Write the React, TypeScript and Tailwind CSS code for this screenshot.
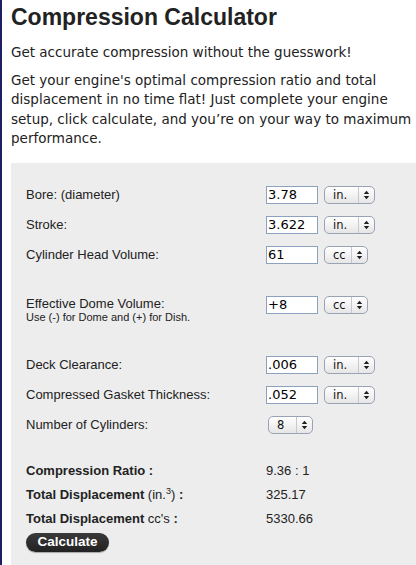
import React from "react";

const SANS = "font-['Liberation_Sans',Arial,sans-serif]";
const LUC = "font-['DejaVu_Sans',sans-serif]";

function Arrows() {
  return (
    <svg width="7" height="10" viewBox="0 0 7 10">
      <polygon points="0.8,4 3.5,0.8 6.2,4" fill="#1f1f1f" />
      <polygon points="0.8,6 3.5,9.2 6.2,6" fill="#1f1f1f" />
    </svg>
  );
}

function Sel({ label, className }: { label: string; className: string }) {
  return (
    <div
      className={`flex h-[18px] items-stretch rounded-[5px] border border-[#9aa3b4] bg-gradient-to-b from-white to-[#e6e6e6] ${className}`}
    >
      <span className={`flex-1 pl-[8px] text-[11.5px] leading-[16px] text-[#111] ${LUC}`}>{label}</span>
      <span className="flex w-[16px] items-center justify-center border-l border-[#c4c8d0]">
        <Arrows />
      </span>
    </div>
  );
}

function Field({ value }: { value: string }) {
  return (
    <input
      readOnly
      defaultValue={value}
      className={`h-[18px] w-[52px] border border-[#8ea2bf] bg-white px-[1px] text-[13px] leading-[16px] text-black outline-none ${LUC}`}
    />
  );
}

function Row({ label, value, unit, selW }: { label: string; value: string; unit: string; selW: string }) {
  return (
    <div className="flex h-[30px] items-center">
      <div className="w-[240px] text-[13px] text-[#222]">{label}</div>
      <Field value={value} />
      <Sel label={unit} className={`ml-[6px] ${selW}`} />
    </div>
  );
}

export default function App() {
  return (
    <div className={`min-h-screen w-[416px] overflow-hidden border-l-2 border-[#1d1f62] bg-white pl-[9px] ${SANS}`}>
      <h1 className="mt-[4px] text-[23px] font-bold leading-[26px] text-[#222]">Compression Calculator</h1>
      <p className={`mt-[13px] text-[13.5px] leading-[19.5px] text-[#222] ${LUC}`}>
        Get accurate compression without the guesswork!
      </p>
      <p className={`mt-[8px] whitespace-nowrap text-[13.5px] leading-[19.5px] text-[#222] ${LUC}`}>
        Get your engine's optimal compression ratio and total
        <br />
        displacement in no time flat! Just complete your engine
        <br />
        setup, click calculate, and you’re on your way to maximum
        <br />
        performance.
      </p>

      <div className="mt-[14px] min-h-[420px] bg-[#ededed] pl-[15px] pt-[17px] text-[#222]">
        <Row label="Bore: (diameter)" value="3.78" unit="in." selW="w-[51px]" />
        <Row label="Stroke:" value="3.622" unit="in." selW="w-[51px]" />
        <Row label="Cylinder Head Volume:" value="61" unit="cc" selW="w-[44px]" />

        <div className="mt-[26px] flex items-start">
          <div className="w-[240px]">
            <div className="text-[13px] leading-[15px]">Effective Dome Volume:</div>
            <div className="text-[11px] leading-[12px]">Use (-) for Dome and (+) for Dish.</div>
          </div>
          <Field value="+8" />
          <Sel label="cc" className="ml-[6px] w-[44px]" />
        </div>

        <div className="mt-[27px]">
          <Row label="Deck Clearance:" value=".006" unit="in." selW="w-[51px]" />
          <Row label="Compressed Gasket Thickness:" value=".052" unit="in." selW="w-[51px]" />
          <div className="flex h-[30px] items-center">
            <div className="w-[240px] text-[13px]">Number of Cylinders:</div>
            <Sel label="8" className="ml-[2px] w-[45px]" />
          </div>
        </div>

        <div className="mt-[19px] text-[13px]">
          <div className="flex h-[24px] items-center">
            <div className="w-[240px] font-bold">Compression Ratio :</div>
            <div>9.36 : 1</div>
          </div>
          <div className="flex h-[24px] items-center">
            <div className="w-[240px]">
              <span className="font-bold">Total Displacement</span> (in.<sup className="text-[9px]">3</sup>) <span className="font-bold">:</span>
            </div>
            <div>325.17</div>
          </div>
          <div className="flex h-[24px] items-center">
            <div className="w-[240px]">
              <span className="font-bold">Total Displacement</span> cc's <span className="font-bold">:</span>
            </div>
            <div>5330.66</div>
          </div>
        </div>

        <button
          type="button"
          className="mt-[2px] flex h-[19px] w-[83px] items-center justify-center rounded-full bg-gradient-to-b from-[#3a3a3a] to-[#222] text-[13.5px] font-bold leading-none text-white shadow-[0_1px_1px_rgba(0,0,0,0.3)]"
        >
          Calculate
        </button>
      </div>
    </div>
  );
}
